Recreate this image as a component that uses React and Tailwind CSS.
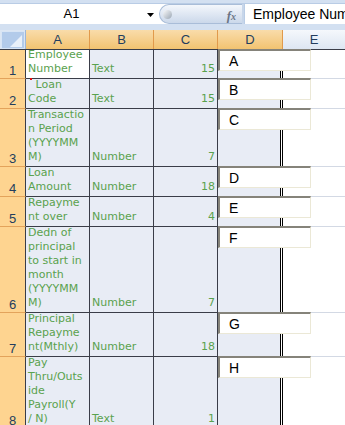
const rows = [
  { n: 1, h: 29, a: ['Employee', 'Number'], b: 'Text', c: '15', box: 'A', sel: true },
  { n: 2, h: 30, a: ['*Loan', 'Code'], b: 'Text', c: '15', box: 'B' },
  { n: 3, h: 58, a: ['Transactio', 'n Period', '(YYYYMM', 'M)'], b: 'Number', c: '7', box: 'C' },
  { n: 4, h: 30, a: ['Loan', 'Amount'], b: 'Number', c: '18', box: 'D' },
  { n: 5, h: 30, a: ['Repayme', 'nt over'], b: 'Number', c: '4', box: 'E' },
  { n: 6, h: 86, a: ['Dedn of', 'principal', 'to start in', 'month', '(YYYYMM', 'M)'], b: 'Number', c: '7', box: 'F' },
  { n: 7, h: 44, a: ['Principal', 'Repayme', 'nt(Mthly)'], b: 'Number', c: '18', box: 'G' },
  { n: 8, h: 72, a: ['Pay', 'Thru/Outs', 'ide', 'Payroll(Y', '/ N)'], b: 'Text', c: '1', box: 'H' },
];

const cellText = "font-['DejaVu_Sans',sans-serif] text-[11px] leading-[14px] text-[#5aa24e]";

const Line = ({ text }) => {
  if (text.startsWith('*')) {
    return (
      <div>
        <span className="inline-block w-[2px] h-[2px] bg-[#e01010] align-[8px] ml-[2px]" />
        {' ' + text.slice(1)}
      </div>
    );
  }
  return <div className="whitespace-nowrap">{text}</div>;
};

const FormulaBar = () => (
  <div className="flex h-[21px] mt-[3px] mb-[6px] border-t border-[#b9cce5] bg-white">
    <div className="relative w-[159px] flex items-center justify-center">
      <span className="font-['Liberation_Sans',sans-serif] text-[13px] text-black -ml-[16px]">A1</span>
      <svg className="absolute left-[147px] top-[9px]" width="7" height="4" viewBox="0 0 7 4">
        <path d="M0 0h7L3.5 4z" fill="#000" />
      </svg>
    </div>
    <div className="relative w-[83px] rounded-l-[10px] border border-r-0 border-[#a9bdd8] bg-gradient-to-b from-[#f4f7fc] to-[#cbd8ea]">
      <div className="absolute left-[3px] top-[5px] w-[9px] h-[9px] rounded-full bg-gradient-to-br from-[#fbfbfb] to-[#9aa6b4]" />
      <span className="absolute right-[6px] top-[1px] font-['Liberation_Serif',serif] italic font-bold text-[13px] text-[#6b7585]">
        f<span className="text-[10px]">x</span>
      </span>
    </div>
    <div className="w-[2px] bg-[#c7d6ea]" />
    <div className="flex-1 flex items-center pl-[8px] overflow-hidden whitespace-nowrap font-['Liberation_Sans',sans-serif] text-[14px] text-black border-l border-[#b9cce5]">
      Employee Number
    </div>
  </div>
);

const HeaderRow = () => {
  const orange = 'bg-gradient-to-b from-[#f9dcaa] to-[#f2c370] border-r border-[#e19a4c]';
  const label = "flex items-center justify-center font-['Liberation_Sans',sans-serif] text-[13px] text-[#233d5e]";
  return (
    <div className="flex h-[20px] border-b border-[#3a3d48]">
      <div className="w-[26px] bg-[#dce6f3] border-r border-[#9db6d8] p-[1px]">
        <svg width="24" height="18" viewBox="0 0 24 18">
          <rect x="0" y="0" width="24" height="18" fill="#b3cbea" />
          <rect x="0.5" y="0.5" width="23" height="17" fill="none" stroke="#d8e5f5" />
          <path d="M9 16L21 16L21 4Z" fill="#e9f0f9" />
        </svg>
      </div>
      <div className={`w-[64px] ${orange} ${label}`}>A</div>
      <div className={`w-[64px] ${orange} ${label}`}>B</div>
      <div className={`w-[64px] ${orange} ${label}`}>C</div>
      <div className={`w-[65px] ${orange} ${label}`}>D</div>
      <div className={`flex-1 bg-gradient-to-b from-[#f5f8fc] to-[#dde6f2] ${label}`}>E</div>
    </div>
  );
};

const GridRow = ({ row }) => (
  <div className="flex" style={{ height: row.h + 'px' }}>
    <div className="w-[26px] bg-[#fed490] border-r border-r-[#3a3d48] border-b border-b-[#e3a35b] flex items-end justify-center pb-[1px] font-['Liberation_Sans',sans-serif] text-[13px] leading-none text-[#233d5e]">
      {row.n}
    </div>
    <div className={`w-[64px] border-r border-b border-[#3a3d48] flex flex-col justify-end pl-[2px] pb-[2px] ${row.sel ? 'bg-white' : 'bg-[#e8ecf5]'} ${cellText}`}>
      {row.a.map((t, i) => (
        <Line key={i} text={t} />
      ))}
    </div>
    <div className={`w-[64px] border-r border-b border-[#3a3d48] bg-[#e8ecf5] flex items-end pl-[2px] pb-[2px] ${cellText}`}>
      {row.b}
    </div>
    <div className={`w-[64px] border-r border-b border-[#3a3d48] bg-[#e8ecf5] flex items-end justify-end pr-[2px] pb-[2px] ${cellText}`}>
      {row.c}
    </div>
    <div className="relative w-[65px] flex">
      <div className="flex-1 bg-[#e8ecf5]" />
      <div className="w-px bg-black" />
      <div className="w-px bg-white" />
      <div className="w-px bg-black" />
      <div className="absolute left-0 -top-px w-[93px] h-[22px] z-10 bg-white border-t-2 border-l-2 border-[#85837a] border-r border-b border-r-[#ebe8d6] border-b-[#ebe8d6] pt-[3px] pl-[9px] font-['Liberation_Sans',sans-serif] text-[14px] leading-[14px] text-black">
        {row.box}
      </div>
    </div>
    <div className="flex-1 bg-white border-b border-[#d3d9e4]" />
  </div>
);

export default function App() {
  return (
    <div className="w-[345px] h-[425px] overflow-hidden bg-[#d3e0f1]">
      <FormulaBar />
      <HeaderRow />
      {rows.map((r) => (
        <GridRow key={r.n} row={r} />
      ))}
    </div>
  );
}
